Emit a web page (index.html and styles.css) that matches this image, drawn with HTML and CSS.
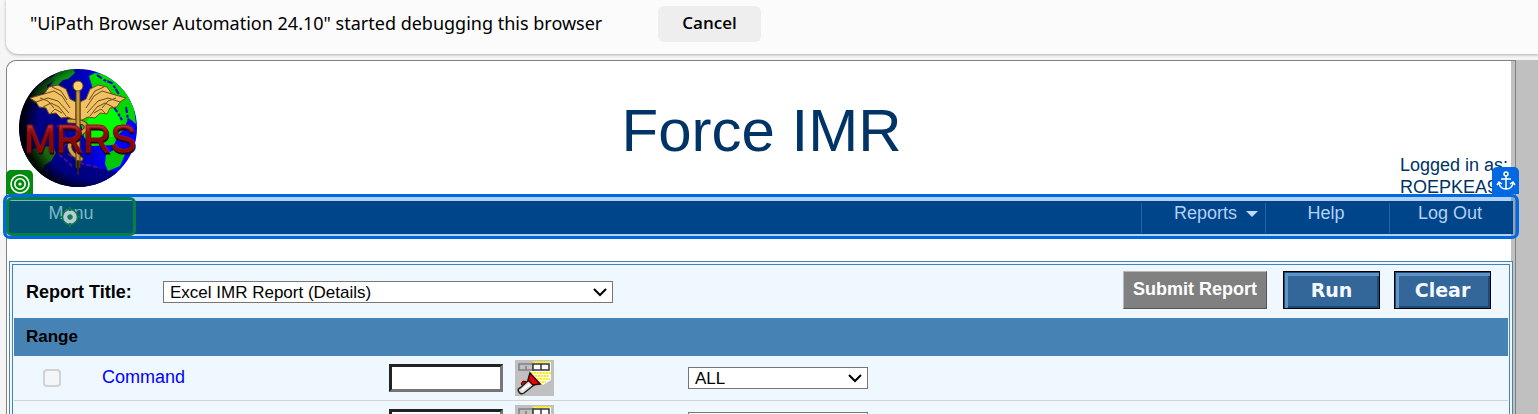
FILE: index.html
```html
<!DOCTYPE html>
<html lang="en">
<head>
<meta charset="utf-8">
<title>Force IMR</title>
<link rel="stylesheet" href="styles.css">
</head>
<body>
<svg class="defs" width="0" height="0" aria-hidden="true">
  <symbol id="torch" viewBox="0 0 39 36">
    <path fill="#ffffff" d="M18 2h18v18l-8 5-13-12z"/>
    <path stroke="#ffee00" stroke-width="2" stroke-dasharray="2 1" fill="none" d="M18 2h17M16 13h20M17 16h18M22 19h13M24 22h7"/>
    <path fill="#c0c0c0" stroke="#808080" stroke-width="1.5" d="M4 4h14v6H4zM11 6v4"/>
    <path fill="#ffffff" stroke="#333333" stroke-width="1.5" d="M18 4h16v6H18zM26 4v6"/>
    <path fill="#dd0000" stroke="#500000" d="M6 24l2-3 4 1-4 4z"/>
    <path fill="#e0e0e0" stroke="#222222" stroke-width="1.5" d="M14 20l5 5L9 33q-3 2-5-1t1-4z"/>
    <path stroke="#ffffff" stroke-width="2" d="M7 30l8-6"/>
    <path fill="#ee0000" stroke="#300000" stroke-width="1.5" d="M15 13l10 11-7 1-5-5z"/>
  </symbol>
  <symbol id="chevron" viewBox="0 0 14 10">
    <path d="M1 2l6 6 6-6" fill="none" stroke="#000000" stroke-width="2"/>
  </symbol>
</svg>

<div class="infobar">
  <span>"UiPath Browser Automation 24.10" started debugging this browser</span>
  <button class="cancel" type="button">Cancel</button>
</div>

<div class="viewport">
  <div class="page">
    <main class="sheet">
      <header class="header">
        <svg class="logo" viewBox="0 0 118 120" role="img" aria-label="MRRS">
          <defs>
            <clipPath id="disc"><circle cx="59" cy="60" r="59"/></clipPath>
            <radialGradient id="shade" gradientUnits="userSpaceOnUse" cx="74" cy="56" r="76">
              <stop offset="0.72" stop-color="#000000" stop-opacity="0"/>
              <stop offset="0.92" stop-color="#000000" stop-opacity="0.9"/>
            </radialGradient>
            <linearGradient id="sea">
              <stop offset="0.3" stop-color="#000084"/>
              <stop offset="0.6" stop-color="#0000c8"/>
              <stop offset="0.75" stop-color="#0000ff"/>
            </linearGradient>
            <linearGradient id="letter" x1="0" y1="0" x2="0" y2="1">
              <stop offset="0.15" stop-color="#c83840"/>
              <stop offset="0.35" stop-color="#960808"/>
              <stop offset="0.8" stop-color="#860000"/>
            </linearGradient>
          </defs>
          <g clip-path="url(#disc)">
            <rect width="118" height="120" fill="url(#sea)"/>
            <path fill="#000084" d="M0 76h40l24 20 34 8v20H0z"/>
            <path fill="#156a10" d="M10 32l8-14 13-9 5 4-8 4 1 6-8 3-5 9zM20 79l14-1 3 7-5 8-6 4-4 9-9-8-9-3 5-12z"/>
            <path fill="#0c8d14" d="M31 11l9-8 14-2 2 4-7 6-5 1-5 5-8 1 5-6z"/>
            <path fill="#00d800" d="M70 8l6-3 14 2 16 15 9 18 2 16-8-6-3 10-7 7-4 10-22 1-8-9-4-17 9-10 9-2z"/>
            <path fill="#00ff00" d="M67 55l10-15 13-3 9 9 3 10-6 12-23 6z"/>
            <path fill="#00c808" d="M87 86l12-6 9 2-7 16-12 5-3-7z"/>
            <path fill="none" stroke="#0000d4" stroke-width="2" stroke-dasharray="6 2 3 1" d="M78 7l7 5 8 3 8 13M95 39l8 13M107 39l2 12 6 4M70 12l3 9"/>
            <path fill="none" stroke="#3b10ac" stroke-width="2" stroke-dasharray="5 2" d="M38 57l11 16-9 13 13 12M49 86l15 10 18 4"/>
            <circle cx="59" cy="60" r="59" fill="url(#shade)"/>
          </g>
          <g stroke="#6e4a16" stroke-width="1" stroke-linejoin="round">
            <path fill="#f0c264" d="M57 34L51 31 47 21 39 17 30 19 25 26 11 30l6 4 3 5 7 1 3 6 7-1 5 5 7-1 8 4z"/>
            <path fill="#f0c264" d="M61 34L67 31 71 21 79 17 88 19 93 26 107 30l-6 4-3 5-7 1-3 6-7-1-5 5-7-1-8 4z"/>
            <path fill="none" d="M25 26l10-3 8 5 8 12M17 34l12-4 10 3 11 12M24 39l8-4 8 4 7 9M32 45l4-4 7 4M33 19l9 4 6 9M21 30l8 3 6 7M93 26l-10-3-8 5-8 12M101 34l-12-4-10 3-11 12M94 39l-8-4-8 4-7 9M86 45l-4-4-7 4M85 19l-9 4-6 9M97 30l-8 3-6 7"/>
          </g>
          <g fill="none" stroke-linecap="round">
            <path stroke="#5a3d0c" stroke-width="5" d="M50 53q20 0 17 8-8 8-15 12-4 6 2 13l8 5"/>
            <path stroke="#d9a541" stroke-width="3" d="M50 53q20 0 17 8-8 8-15 12-4 6 2 13l8 5"/>
            <path stroke="#4c360d" stroke-width="5" d="M59 22v76"/>
            <path stroke="#c99a36" stroke-width="3" d="M59 22v70"/>
            <path stroke="#32250a" stroke-width="2" stroke-dasharray="3 2" d="M59 93v13"/>
          </g>
          <circle cx="59" cy="18" r="5" fill="#ffd16a" stroke="#6b470c"/>
          <text class="logo-shadow" x="6" y="86" font-size="38">MRRS</text>
          <text class="logo-text" x="5" y="84" font-size="38" fill="url(#letter)">MRRS</text>
        </svg>
        <h1>Force IMR</h1>
        <p class="user">Logged in as:<br>ROEPKEA9</p>
      </header>

      <nav class="nav">
        <ul class="menu">
          <li class="menu-first"><a href="#">Menu</a></li>
          <li><a href="#">Reports</a><svg class="caret" viewBox="0 0 12 6" aria-hidden="true"><path d="M0 0h12L6 6z" fill="#c0daf8"/></svg></li>
          <li><a href="#">Help</a></li>
          <li><a href="#">Log Out</a></li>
        </ul>
        <div class="target"></div>
        <svg class="marker" viewBox="0 0 20 20" aria-hidden="true">
          <circle cx="10" cy="10" r="5" fill="none" stroke="#b7cbd8" stroke-width="5"/>
          <circle cx="10" cy="10" r="7.5" fill="none" stroke="#107a43" stroke-width="1.5"/>
          <circle cx="10" cy="10" r="2.5" fill="#108043"/>
          <path d="M10 0v4M10 16v4M0 10h3M17 10h3" stroke="#107a43" stroke-width="2"/>
        </svg>
        <div class="badge badge-target">
          <svg viewBox="0 0 20 20" fill="none" stroke="#ffffff" stroke-width="1.6" aria-hidden="true"><circle cx="10" cy="10" r="9"/><circle cx="10" cy="10" r="5.2"/><circle cx="10" cy="10" r="1.6" fill="#ffffff" stroke="none"/></svg>
        </div>
        <div class="badge badge-anchor">
          <svg viewBox="0 0 20 20" fill="none" stroke="#ffffff" stroke-width="1.5" aria-hidden="true"><circle cx="10" cy="3" r="2"/><path d="M10 5v13M5 8h10M3 12q1 6 7 6t7-6M1 14l2-3 3 2M19 14l-2-3-3 2"/></svg>
        </div>
      </nav>

      <form class="panel">
        <div class="title-row">
          <label for="report">Report Title:</label>
          <span class="select report"><select id="report"><option>Excel IMR Report (Details)</option></select><svg aria-hidden="true"><use href="#chevron"/></svg></span>
          <div class="actions">
            <button class="submit" type="button">Submit Report</button>
            <button class="blue" type="button">Run</button>
            <button class="blue" type="button">Clear</button>
          </div>
        </div>
        <h2>Range</h2>
        <table class="range">
          <tr>
            <td class="check"><input type="checkbox" aria-label="Command" disabled></td>
            <td class="name"><a href="#">Command</a></td>
            <td class="value"><div class="lookup"><input type="text" aria-label="Command value"><button type="button" aria-label="Look up"><svg aria-hidden="true"><use href="#torch"/></svg></button></div></td>
            <td><span class="select scope"><select aria-label="Command scope"><option>ALL</option></select><svg aria-hidden="true"><use href="#chevron"/></svg></span></td>
          </tr>
          <tr>
            <td class="check"><input type="checkbox" aria-label="Range item" disabled></td>
            <td class="name"></td>
            <td class="value"><div class="lookup"><input type="text" aria-label="Range value"><button type="button" aria-label="Look up"><svg aria-hidden="true"><use href="#torch"/></svg></button></div></td>
            <td><span class="select scope"><select aria-label="Range scope"><option>ALL</option></select><svg aria-hidden="true"><use href="#chevron"/></svg></span></td>
          </tr>
        </table>
      </form>
    </main>
  </div>
</div>
</body>
</html>
```

FILE: styles.css
```css
* { box-sizing: border-box; }

html { height: 100%; overflow: hidden; }

body {
  margin: 0;
  height: 100%;
  overflow: hidden;
  background: #f5f5f5;
  font: 18px/22px "Liberation Sans", Arial, sans-serif;
  color: #000;
}

button, input, select { font-family: inherit; margin: 0; }

.defs { position: absolute; }

/* Browser notification */
.infobar {
  display: flex;
  align-items: center;
  gap: 56px;
  margin-left: 6px;
  padding: 6px 24px 12px;
  background: #fbfbfb;
  border-bottom-left-radius: 12px;
  box-shadow: 0 1px 3px rgba(0, 0, 0, 0.3);
  font: 18px/26px "Noto Sans", "Open Sans", sans-serif;
}

.infobar span { padding-bottom: 2px; }

.cancel {
  height: 36px;
  padding: 0 24px 2px;
  border: 0;
  border-radius: 6px;
  background: #eee;
  color: #000;
  font: 600 17px/26px "Open Sans", sans-serif;
}

/* Page frame */
.viewport {
  margin: 6px 0 0 6px;
  background: #c0c0c0;
  border-top-left-radius: 10px;
}

.page {
  margin-right: 22px;
  padding-right: 4px;
  border: 1px solid #808080;
  border-bottom: 0;
  border-top-left-radius: 10px;
}

.sheet {
  background: #fff;
  border-top-left-radius: 9px;
}

.header {
  display: grid;
  grid-template-columns: 1fr auto 1fr;
  align-items: start;
  padding: 7px 3px 3px 12px;
}

.logo { width: 118px; height: 120px; margin-bottom: 10px; }
.logo-text { stroke: #8a1018; stroke-width: 1; }
.logo-shadow { fill: #2b0008; stroke: #2b0008; stroke-width: 1; }

h1 {
  margin: 0;
  padding: 29px 4px 0 0;
  font-size: 60px;
  line-height: 68px;
  font-weight: 400;
  color: #036;
}

.user {
  align-self: end;
  justify-self: end;
  margin: 0;
  color: #036;
}

/* Menu bar */
.nav {
  position: relative;
  z-index: 1;
  margin: 0 -2px 0 2px;
}

.nav::before {
  content: "";
  position: absolute;
  z-index: -1;
  inset: -7px -6px -5px;
  border: 3px solid #0068e0;
  border-radius: 7px;
  background: rgba(0, 104, 224, 0.3);
}

.menu {
  display: flex;
  margin: 0;
  padding: 0;
  list-style: none;
  background: #00448a;
}

.menu li {
  display: flex;
  justify-content: center;
  gap: 9px;
  width: 124px;
  height: 30px;
  margin: 2px 0 1px;
  padding: 0 3px 9px 0;
  border-left: 1px solid #2264ae;
  line-height: 21px;
}

.menu .menu-first { margin-right: auto; padding-right: 0; border: 0; }
.menu a { color: #b3d1f5; text-decoration: none; }
.caret { width: 12px; height: 6px; margin: 8px -28px 0 0; }

.target {
  position: absolute;
  top: -4px;
  left: -3px;
  width: 130px;
  bottom: -2px;
  border: 3px solid #087d46;
  border-radius: 6px;
  background: rgba(0, 125, 70, 0.3);
}

.marker { position: absolute; left: 51px; top: 6px; width: 20px; height: 20px; }

.badge {
  position: absolute;
  display: grid;
  place-items: center;
  width: 27px;
  height: 27px;
}

.badge svg { width: 20px; height: 20px; }
.badge-target { left: -3px; top: -31px; height: 27px; background: #008a0e; border-radius: 5px 5px 0 0; clip-path: inset(0 0 3px); }
.badge-anchor { right: -6px; top: -34px; background: #0068e0; border-radius: 5px 5px 0 0; }

/* Report form */
.panel {
  margin: 27px -2px 0 2px;
  padding: 1px;
  border: 4px double #4682b4;
  background: #f0f8ff;
}

.title-row {
  display: flex;
  align-items: center;
  padding: 5px 17px 9px 12px;
  font-weight: 700;
}

.title-row label { width: 137px; margin-top: 4px; }

.select { position: relative; display: block; }

.select select {
  display: block;
  width: 100%;
  height: 22px;
  padding: 0 6px;
  border: 1px solid #767676;
  border-radius: 0;
  appearance: none;
  background: #fff;
  color: #000;
  font-size: 17px;
}

.select svg {
  position: absolute;
  right: 6px;
  top: 6px;
  width: 14px;
  height: 10px;
  pointer-events: none;
}

.report { width: 450px; margin-top: 4px; }
.scope { width: 180px; }

.actions { display: flex; gap: 14px; margin-left: auto; }

.submit {
  height: 38px;
  margin-right: 2px;
  padding: 0 9px 2px;
  border: 1px solid;
  border-color: #b8b8b8 #555 #555 #b8b8b8;
  background: #808080;
  color: #fff;
  font-size: 18px;
  font-weight: 700;
}

.blue {
  width: 97px;
  height: 38px;
  padding: 0;
  border: 1px solid #000;
  background: #369;
  box-shadow: inset 1px 1px 0 #1d4b78, inset 4px 4px 0 #6094c6, inset -2px -2px 0 #1d4b78;
  color: #f4f8ff;
  font: 700 19px/24px "DejaVu Sans", Verdana, sans-serif;
}

h2 {
  margin: 0;
  padding: 0 12px;
  background: #4682b4;
  font-size: 17px;
  line-height: 38px;
}

.range {
  width: 100%;
  table-layout: fixed;
  border-collapse: separate;
  border-spacing: 0;
}

.range td {
  height: 45px;
  padding: 0;
  border-bottom: 1px solid #d3d3d3;
  vertical-align: middle;
}

.range .check { width: 88px; padding-left: 29px; }
.range .name { width: 287px; padding-bottom: 2px; }
.range .value { width: 299px; }
.name a { color: #00f; text-decoration: none; }

.check input {
  display: block;
  width: 18px;
  height: 18px;
  appearance: none;
  border: 2px solid #d0d2d4;
  border-radius: 4px;
  background: #f3f6f9;
}

.lookup { display: flex; align-items: center; gap: 12px; }

.lookup input {
  width: 114px;
  height: 28px;
  padding: 0 4px;
  border: 3px solid;
  border-color: #222 #767676 #767676 #222;
  background: #fff;
  font-size: 16px;
}

.lookup button { display: block; padding: 0; border: 0; background: #c0c0c0; }
.lookup svg { display: block; width: 39px; height: 36px; }
```
